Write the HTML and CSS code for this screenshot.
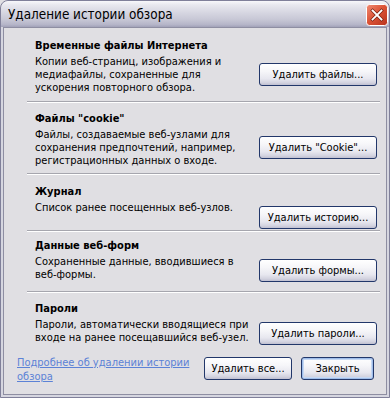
FILE: index.html
```html
<!DOCTYPE html>
<html lang="ru">
<head>
<meta charset="utf-8">
<title>Удаление истории обзора</title>
<link rel="stylesheet" href="styles.css">
</head>
<body>
<div class="window">
  <div class="titlebar">
    <span class="title">Удаление истории обзора</span>
    <span class="close">
      <svg width="22" height="22" viewBox="0 0 22 22">
        <defs>
          <linearGradient id="cg" x1="0" y1="0" x2="1" y2="1">
            <stop offset="0" stop-color="#f08c74"/>
            <stop offset="0.45" stop-color="#dc5538"/>
            <stop offset="1" stop-color="#b8321c"/>
          </linearGradient>
        </defs>
        <rect x="0.5" y="0.5" width="21" height="21" rx="3" fill="url(#cg)" stroke="#ffffff"/>
        <path d="M6.5 6.5 L15.5 15.5 M15.5 6.5 L6.5 15.5" stroke="#7a2212" stroke-width="3.2" stroke-linecap="square"/>
        <path d="M6.5 6.5 L15.5 15.5 M15.5 6.5 L6.5 15.5" stroke="#ffffff" stroke-width="1.8" stroke-linecap="square"/>
      </svg>
    </span>
  </div>
  <div class="client">
    <div class="groups">
      <div class="section s1">
        <div class="info">
          <div class="heading">Временные файлы Интернета</div>
          <div class="desc">Копии веб-страниц, изображения и<br>медиафайлы, сохраненные для<br>ускорения повторного обзора.</div>
        </div>
        <button class="btn">Удалить файлы...</button>
      </div>
      <div class="sep"></div>
      <div class="section s2">
        <div class="info">
          <div class="heading">Файлы "cookie"</div>
          <div class="desc">Файлы, создаваемые веб-узлами для<br>сохранения предпочтений, например,<br>регистрационных данных о входе.</div>
        </div>
        <button class="btn">Удалить "Cookie"...</button>
      </div>
      <div class="sep"></div>
      <div class="section s3">
        <div class="info">
          <div class="heading">Журнал</div>
          <div class="desc">Список ранее посещенных веб-узлов.</div>
        </div>
        <button class="btn">Удалить историю...</button>
      </div>
      <div class="sep"></div>
      <div class="section s4">
        <div class="info">
          <div class="heading">Данные веб-форм</div>
          <div class="desc">Сохраненные данные, вводившиеся в<br>веб-формы.</div>
        </div>
        <button class="btn">Удалить формы...</button>
      </div>
      <div class="sep"></div>
      <div class="section s5">
        <div class="info">
          <div class="heading">Пароли</div>
          <div class="desc">Пароли, автоматически вводящиеся при<br>входе на ранее посещавшийся веб-узел.</div>
        </div>
        <button class="btn">Удалить пароли...</button>
      </div>
    </div>
    <div class="footer">
      <a class="link" href="#">Подробнее об удалении истории<br>обзора</a>
      <div class="actions">
        <button class="btn btn-all">Удалить все...</button>
        <button class="btn btn-close">Закрыть</button>
      </div>
    </div>
  </div>
</div>
</body>
</html>
```
FILE: styles.css
```css
html, body {
  margin: 0;
  padding: 0;
  background: #e0dfe3;
}
body {
  font-family: "DejaVu Sans Condensed", "Liberation Sans", sans-serif;
  font-size: 11px;
  color: #000;
}
.window {
  width: 390px;
  height: 398px;
  box-sizing: border-box;
  border: 1px solid #80809a;
  border-radius: 8px 8px 0 0;
  background: #d6d6e0;
  padding: 0 2px 2px 2px;
  display: flex;
  flex-direction: column;
  overflow: hidden;
}
.titlebar {
  height: 26px;
  flex: none;
  margin: 0 -2px;
  padding: 0 1px 0 7px;
  display: flex;
  align-items: center;
  justify-content: space-between;
  background: linear-gradient(to bottom, #f8f8fb 0%, #e8e8ef 15%, #d6d6e1 45%, #c8c8d6 70%, #b6b6c9 90%, #a2a2b8 100%);
  border-radius: 7px 7px 0 0;
}
.title {
  font-family: "DejaVu Sans Condensed", "Liberation Sans", sans-serif;
  font-size: 13.4px;
  color: #000;
  padding-top: 1px;
}
.close {
  display: block;
  width: 22px;
  height: 22px;
  margin-top: 1px;
}
.close svg {
  display: block;
}
.client {
  flex: 1;
  background: #e0dfe3;
  border: 1px solid #8e8ea2;
  display: flex;
  flex-direction: column;
}
.groups {
  margin: 0 6px 0 23px;
}
.section {
  display: flex;
  align-items: flex-start;
  justify-content: space-between;
  box-sizing: border-box;
  padding-left: 8px;
  padding-right: 3px;
}
.info {
  white-space: nowrap;
}
.heading {
  font-weight: bold;
  line-height: 13px;
  margin-bottom: 3px;
}
.desc {
  line-height: 13px;
}
.sep {
  height: 1px;
  background: #a6a6ae;
  border-bottom: 1px solid #ffffff;
}
.s1 { height: 73px; padding-top: 11px; }
.s2 { height: 70px; padding-top: 9px; }
.s3 { height: 55px; padding-top: 10px; }
.s4 { height: 59px; padding-top: 7px; }
.s5 { height: 55px; padding-top: 9px; }
.s1 .btn, .s2 .btn { margin-top: 24px; }
.s3 .btn { margin-top: 21px; }
.s4 .btn, .s5 .btn { margin-top: 20px; }
.btn {
  flex: none;
  width: 118px;
  height: 23px;
  padding: 0;
  font-family: "DejaVu Sans Condensed", "Liberation Sans", sans-serif;
  font-size: 11px;
  color: #000;
  border: 1px solid #22376a;
  border-radius: 3px;
  background: linear-gradient(to bottom, #ffffff 0%, #f6f6f9 35%, #e7e7ef 70%, #d2d2df 90%, #bebecf 100%);
  box-shadow: inset 0 -1px 0 #c4c4d4;
  cursor: default;
}
.footer {
  display: flex;
  align-items: flex-start;
  justify-content: space-between;
  margin-top: 8px;
  padding: 0 12px 0 13px;
}
.link {
  color: #5c82d6;
  text-decoration: underline;
  line-height: 14px;
  white-space: nowrap;
}
.actions {
  display: flex;
  gap: 9px;
  margin-top: 1px;
}
.btn-all {
  width: 88px;
}
.btn-close {
  width: 73px;
  box-shadow: inset 0 0 0 1px #9fbdea, inset 0 0 0 2px #c6d8f3;
}
```
